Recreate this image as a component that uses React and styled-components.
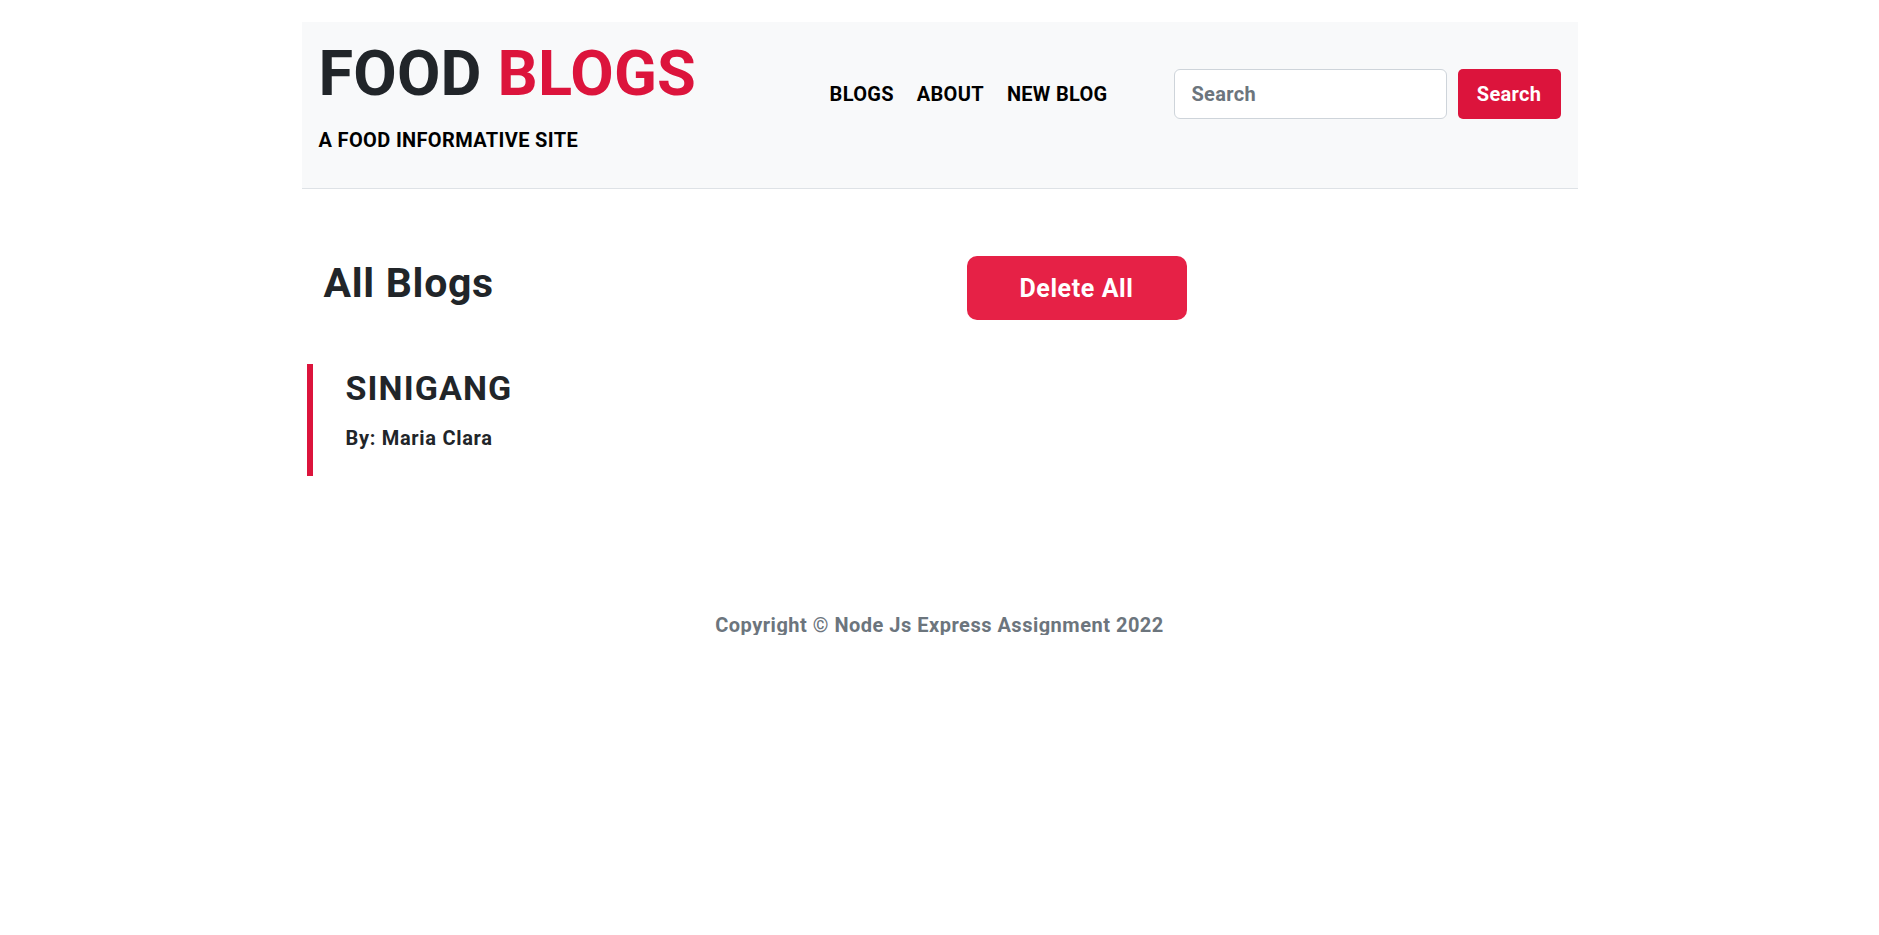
import React from "react";
import styled, { createGlobalStyle } from "styled-components";

const GlobalStyle = createGlobalStyle`
  html, body { margin: 0; padding: 0; background: #ffffff; }
  body { font-family: Roboto, "Liberation Sans", Arial, sans-serif; color: #212529; }
  * { box-sizing: border-box; }
`;

const Page = styled.div`
  width: 1276px;
  margin: 0 auto;
  padding-top: 22px;
`;

const Header = styled.header`
  display: flex;
  align-items: flex-start;
  background: #f8f9fa;
  border-bottom: 1px solid #dee2e6;
  padding: 20px 17px 38px 17px;
`;

const Brand = styled.div`
  display: flex;
  flex-direction: column;
`;

const Logo = styled.h1`
  margin: 0;
  font-size: 63px;
  line-height: 1;
  font-weight: 700;
  color: #212529;
  letter-spacing: 0.2px;
`;

const Accent = styled.span`
  color: #dc143c;
`;

const Tagline = styled.p`
  margin: 25px 0 0;
  font-size: 20px;
  line-height: 1;
  font-weight: 700;
  letter-spacing: 0.35px;
  color: #000;
`;

const Right = styled.div`
  margin-left: auto;
  margin-top: 27px;
  display: flex;
  align-items: center;
`;

const Nav = styled.nav`
  display: flex;
  gap: 23px;
`;

const NavLink = styled.a`
  font-size: 20px;
  line-height: 1;
  font-weight: 700;
  letter-spacing: 0.3px;
  color: #000;
  text-decoration: none;
`;

const SearchForm = styled.form`
  display: flex;
  gap: 11px;
  margin-left: 66px;
`;

const SearchInput = styled.input`
  width: 273px;
  height: 50px;
  border: 1px solid #ced4da;
  border-radius: 6px;
  background: #fff;
  padding: 0 17px;
  font-family: Roboto, "Liberation Sans", Arial, sans-serif;
  font-size: 20px;
  font-weight: 700;
  letter-spacing: 0.3px;
  color: #212529;
  outline: none;
  &::placeholder { color: #6c757d; opacity: 1; }
`;

const SearchButton = styled.button`
  width: 103px;
  height: 50px;
  border: none;
  border-radius: 5px;
  background: #dc143c;
  color: #fff;
  font-family: Roboto, "Liberation Sans", Arial, sans-serif;
  font-size: 20px;
  font-weight: 700;
  letter-spacing: 0.3px;
  cursor: pointer;
`;

const Main = styled.main`
  padding-top: 67px;
`;

const TitleRow = styled.div`
  display: grid;
  grid-template-columns: 665px 220px;
  align-items: start;
`;

const PageTitle = styled.h2`
  margin: 7px 0 0;
  padding-left: 22px;
  font-size: 41px;
  line-height: 1;
  font-weight: 700;
  letter-spacing: 0.7px;
  color: #212529;
`;

const DangerButton = styled.button`
  width: 220px;
  height: 64px;
  border: none;
  border-radius: 10px;
  background: #e62146;
  color: #fff;
  font-family: Roboto, "Liberation Sans", Arial, sans-serif;
  font-size: 25px;
  font-weight: 700;
  letter-spacing: 0.6px;
  cursor: pointer;
`;

const BlogList = styled.section`
  margin-top: 44px;
  display: flex;
  flex-direction: column;
`;

const BlogItem = styled.article`
  margin-left: 5px;
  border-left: 6px solid #dc143c;
  padding: 7px 0 28px 33px;
`;

const BlogTitle = styled.h3`
  margin: 0;
  font-size: 34px;
  line-height: 1;
  font-weight: 700;
  letter-spacing: 1.1px;
  color: #212529;
`;

const Author = styled.p`
  margin: 23px 0 0;
  font-size: 20px;
  line-height: 1;
  font-weight: 700;
  letter-spacing: 0.7px;
  color: #212529;
`;

const Footer = styled.footer`
  margin-top: 139px;
  text-align: center;
  font-size: 20px;
  line-height: 1;
  font-weight: 700;
  letter-spacing: 0.5px;
  color: #6c757d;
`;

export default function App() {
  return (
    <>
      <GlobalStyle />
      <Page>
        <Header>
          <Brand>
            <Logo>
              FOOD <Accent>BLOGS</Accent>
            </Logo>
            <Tagline>A FOOD INFORMATIVE SITE</Tagline>
          </Brand>
          <Right>
            <Nav>
              <NavLink href="#">BLOGS</NavLink>
              <NavLink href="#">ABOUT</NavLink>
              <NavLink href="#">NEW BLOG</NavLink>
            </Nav>
            <SearchForm onSubmit={(e) => e.preventDefault()}>
              <SearchInput type="text" placeholder="Search" />
              <SearchButton type="submit">Search</SearchButton>
            </SearchForm>
          </Right>
        </Header>
        <Main>
          <TitleRow>
            <PageTitle>All Blogs</PageTitle>
            <DangerButton>Delete All</DangerButton>
          </TitleRow>
          <BlogList>
            <BlogItem>
              <BlogTitle>SINIGANG</BlogTitle>
              <Author>By: Maria Clara</Author>
            </BlogItem>
          </BlogList>
        </Main>
        <Footer>Copyright © Node Js Express Assignment 2022</Footer>
      </Page>
    </>
  );
}
